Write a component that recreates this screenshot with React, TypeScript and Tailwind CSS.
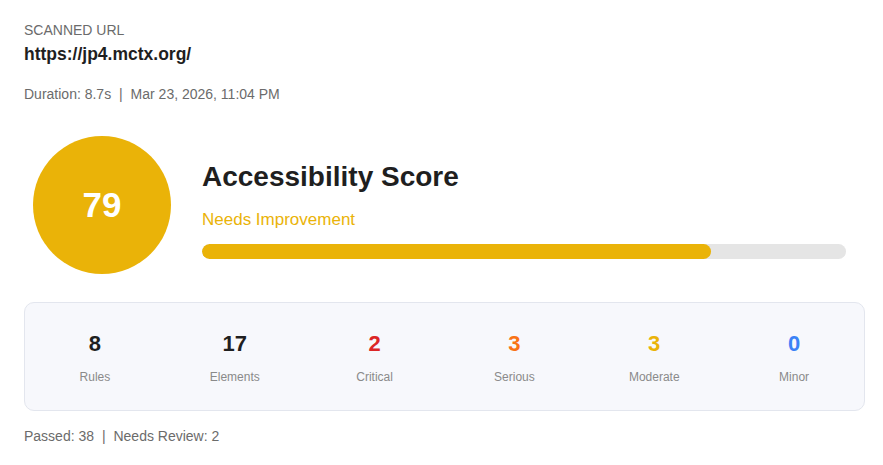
const stats = [
  { value: 8, label: 'Rules', color: 'text-[#1f1f1f]' },
  { value: 17, label: 'Elements', color: 'text-[#1f1f1f]' },
  { value: 2, label: 'Critical', color: 'text-[#dc2626]' },
  { value: 3, label: 'Serious', color: 'text-[#f97316]' },
  { value: 3, label: 'Moderate', color: 'text-[#eab308]' },
  { value: 0, label: 'Minor', color: 'text-[#3b82f6]' },
];

export default function App() {
  const score = 79;

  return (
    <div className="min-h-screen bg-white font-['Liberation_Sans',Arial,sans-serif]">
      <div className="w-[841px] ml-6 pt-[21px]">
        <p className="text-[14px] uppercase text-[#6b6b6b] leading-[18px]">Scanned URL</p>
        <p className="mt-[4px] text-[17.5px] font-bold text-[#1f1f1f] leading-[22px]">
          https://jp4.mctx.org/
        </p>
        <p className="mt-[20px] text-[14px] text-[#6b6b6b] leading-[18px]">
          Duration: 8.7s <span className="mx-[4px]">|</span> Mar 23, 2026, 11:04 PM
        </p>

        {/* Score */}
        <div className="mt-[33px] flex items-center gap-[31px] pl-[9px]">
          <div className="flex h-[138px] w-[138px] shrink-0 items-center justify-center rounded-full bg-[#eab308]">
            <span className="text-[35px] font-bold text-white">{score}</span>
          </div>
          <div className="flex-1 pr-[19px] pt-[8px]">
            <h2 className="text-[28px] font-bold text-[#1f1f1f] leading-[36px]">Accessibility Score</h2>
            <p className="mt-[14px] text-[17px] text-[#eab308] leading-[22px]">Needs Improvement</p>
            <div className="mt-[13px] h-[15px] w-full overflow-hidden rounded-full bg-[#e5e5e5]">
              <div className="h-full rounded-full bg-[#eab308]" style={{ width: `${score}%` }} />
            </div>
          </div>
        </div>

        {/* Stats */}
        <div className="mt-[28px] grid grid-cols-6 rounded-[10px] border border-[#e3e6ee] bg-[#f7f8fc] pt-[27px] pb-[25px]">
          {stats.map((s) => (
            <div key={s.label} className="flex flex-col items-center">
              <span className={`text-[22px] font-bold leading-[28px] ${s.color}`}>{s.value}</span>
              <span className="mt-[11px] text-[12px] text-[#8a8a8a] leading-[16px]">{s.label}</span>
            </div>
          ))}
        </div>

        <p className="mt-[16px] text-[14px] text-[#6b6b6b] leading-[18px]">
          Passed: 38 <span className="mx-[4px]">|</span> Needs Review: 2
        </p>
      </div>
    </div>
  );
}
